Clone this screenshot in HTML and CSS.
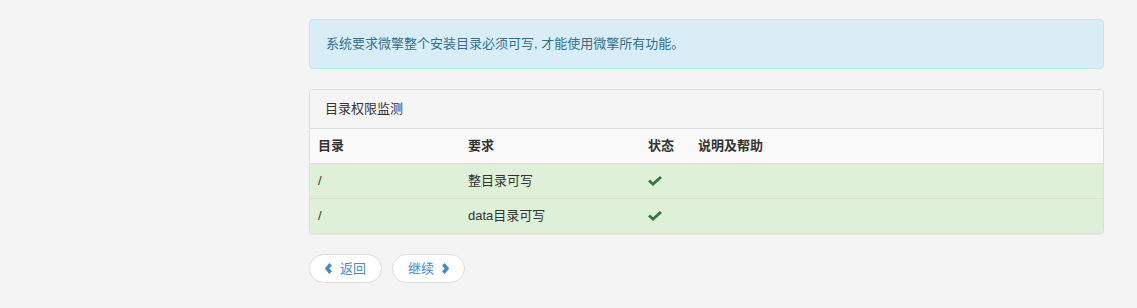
FILE: index.html
```html
<!DOCTYPE html>
<html lang="zh-CN">

<head>
    <meta charset="UTF-8">
    <meta name="viewport" content="width=device-width, initial-scale=1.0">
    <title>安装 - 目录权限监测</title>
    <link rel="stylesheet" href="styles.css">
</head>

<body>
    <div class="page">
        <div class="main">
            <div class="alert">系统要求微擎整个安装目录必须可写, 才能使用微擎所有功能。</div>

            <div class="panel">
                <div class="panel-heading">目录权限监测</div>
                <table class="table">
                    <thead>
                        <tr>
                            <th class="col-dir">目录</th>
                            <th class="col-req">要求</th>
                            <th class="col-state">状态</th>
                            <th>说明及帮助</th>
                        </tr>
                    </thead>
                    <tbody>
                        <tr class="success">
                            <td>/</td>
                            <td>整目录可写</td>
                            <td>
                                <svg class="icon-ok" width="14" height="10" viewBox="0 0 14 10">
                                    <path d="M0 5.4 L2 3.4 L5 6.2 L11.9 0 L14 2.1 L5 10 Z" fill="#3c763d" />
                                </svg>
                            </td>
                            <td></td>
                        </tr>
                        <tr class="success">
                            <td>/</td>
                            <td>data目录可写</td>
                            <td>
                                <svg class="icon-ok" width="14" height="10" viewBox="0 0 14 10">
                                    <path d="M0 5.4 L2 3.4 L5 6.2 L11.9 0 L14 2.1 L5 10 Z" fill="#3c763d" />
                                </svg>
                            </td>
                            <td></td>
                        </tr>
                    </tbody>
                </table>
            </div>

            <div class="actions">
                <a class="btn" href="#">
                    <svg class="chevron" width="7" height="11" viewBox="0 0 7 11">
                        <path d="M4.3 0 L7 2.7 L4.2 5.5 L7 8.3 L4.3 11 L-0.2 5.5 Z" fill="currentColor" />
                    </svg>
                    返回
                </a>
                <a class="btn" href="#">
                    继续
                    <svg class="chevron" width="7" height="11" viewBox="0 0 7 11">
                        <path d="M2.7 0 L0 2.7 L2.8 5.5 L0 8.3 L2.7 11 L7.2 5.5 Z" fill="currentColor" />
                    </svg>
                </a>
            </div>
        </div>
    </div>
</body>

</html>
```

FILE: styles.css
```css
body {
    margin: 0;
    background: #f4f4f4;
    color: #333;
    font-family: "Liberation Sans", Arial, "Noto Sans CJK SC", sans-serif;
    font-size: 13px;
    line-height: 18px;
}

.page {
    padding: 19px 0 0 309px;
}

.main {
    width: 795px;
}

.alert {
    padding: 15px 16px;
    margin-bottom: 20px;
    background: #d9edf7;
    border: 1px solid #bce8f1;
    border-radius: 4px;
    color: #31708f;
}

.panel {
    margin-bottom: 20px;
    background: #fff;
    border: 1px solid #ddd;
    border-radius: 4px;
    box-shadow: 0 1px 1px rgba(0, 0, 0, 0.05);
    overflow: hidden;
}

.panel-heading {
    padding: 10px 15px;
    background: #f5f5f5;
    border-bottom: 1px solid #ddd;
}

.table {
    width: 100%;
    border-collapse: collapse;
    border-spacing: 0;
}

.table th,
.table td {
    padding: 8px;
    height: 18px;
    text-align: left;
    vertical-align: middle;
}

.table th {
    font-weight: bold;
    background: #f9f9f9;
    border-bottom: 1px solid #ddd;
}

.table td {
    border-top: 1px solid #ddd;
}

.table tbody tr:first-child td {
    border-top: none;
}

.col-dir {
    width: 134px;
}

.col-req {
    width: 164px;
}

.col-state {
    width: 34px;
}

.success td {
    background: #dff0d8;
}

.icon-ok {
    display: block;
}

.actions {
    display: flex;
    gap: 10px;
}

.btn {
    display: inline-flex;
    align-items: center;
    gap: 8px;
    padding: 5px 15px;
    line-height: 17px;
    background: #fff;
    border: 1px solid #ddd;
    border-radius: 15px;
    color: #428bca;
    text-decoration: none;
}

.chevron {
    display: block;
}
```
